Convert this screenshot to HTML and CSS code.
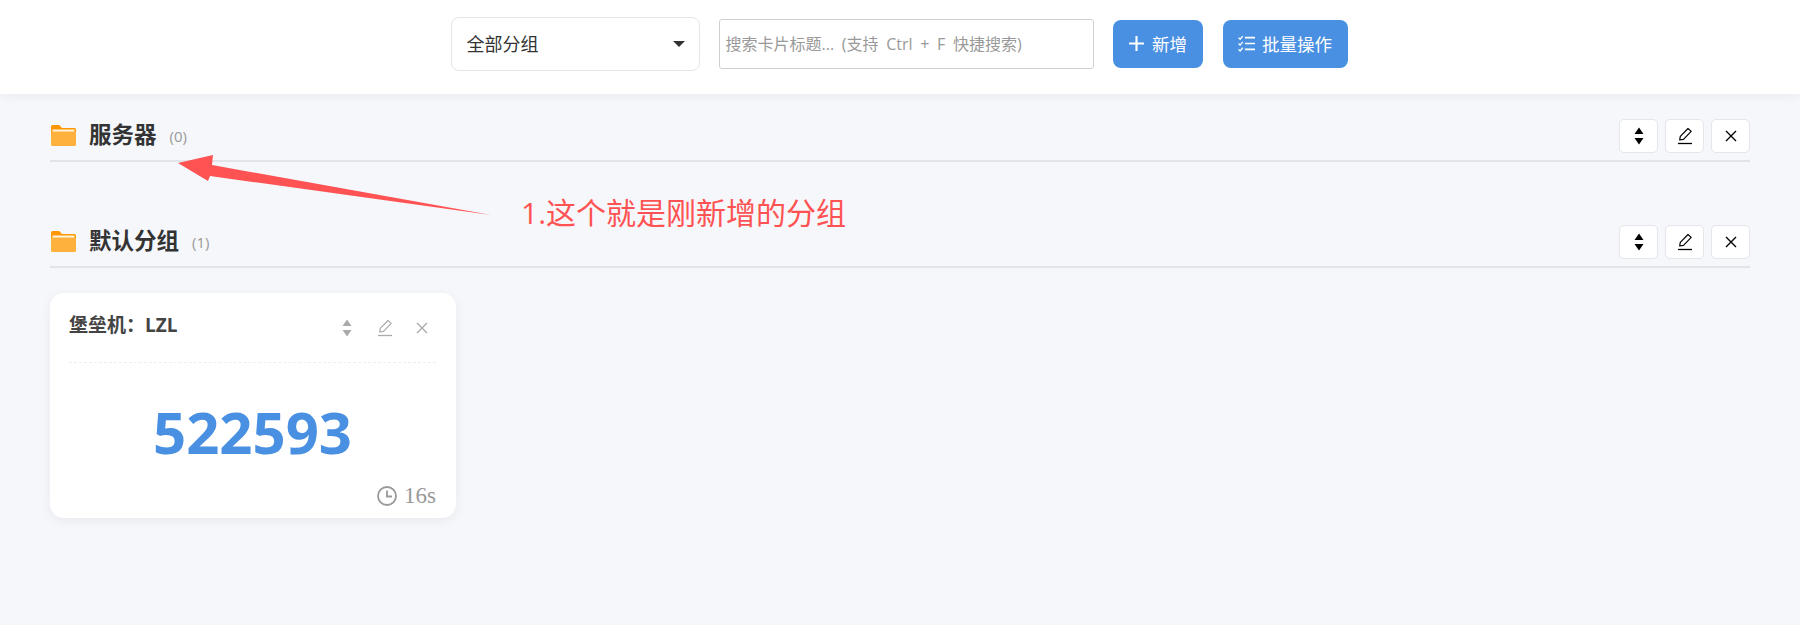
FILE: index.html
```html
<!DOCTYPE html>
<html lang="zh-CN">
<head>
<meta charset="utf-8">
<title>分组</title>
<link rel="stylesheet" href="styles.css">
</head>
<body>
<svg class="icon-defs" width="0" height="0" aria-hidden="true">
  <defs>
    <symbol id="i-sort" viewBox="0 0 14 20"><path d="M7 1.5 11.5 8h-9zM7 18.5 2.500 12h9z" fill="currentColor"/></symbol>
    <symbol id="i-edit" viewBox="0 0 16 18"><path d="M11 1.500 14.200 4.400 6.500 12.300 2.700 13 3.300 9.300z" fill="none" stroke="currentColor" stroke-width="1.200" stroke-linejoin="round"/><path d="M1 16.500h14" stroke="currentColor" stroke-width="1.300"/></symbol>
    <symbol id="i-close" viewBox="0 0 12 12"><path d="M1 1 11 11M11 1 1 11" stroke="currentColor" stroke-width="1.400" fill="none"/></symbol>
    <symbol id="i-folder" viewBox="0 0 25 22"><path d="M0 2.500A1.500 1.500 0 0 1 1.500 1h6.800l2.700 3h12.500A1.500 1.500 0 0 1 25 5.500V10H0z" fill="#ff9800"/><rect x="1.500" y="5.500" width="22" height="6" fill="#fff4e0"/><path d="M0 8.500q0-1 1-1h23q1 0 1 1v12q0 1.500-1.500 1.500h-22Q0 22 0 20.500z" fill="#ffb13d"/></symbol>
  </defs>
</svg>

<header class="topbar">
  <div class="select-wrap">
    <select class="group-select"><option>全部分组</option></select>
  </div>
  <input class="search" type="text" placeholder="搜索卡片标题... (支持 Ctrl + F 快捷搜索)">
  <button class="btn btn-add" type="button">
    <svg class="btn-icon" viewBox="0 0 16 16"><path d="M8 1v14M1 8h14" stroke="currentColor" stroke-width="2" fill="none"/></svg>
    新增
  </button>
  <button class="btn btn-batch" type="button">
    <svg class="btn-icon" viewBox="0 0 16 16"><path d="M6.500 2.500H16M6.500 8H16M6.500 13.500H16" stroke="currentColor" stroke-width="1.500" fill="none"/><path d="M.5 2.500 2 4 4.500 1M.5 8 2 9.500 4.500 6.500M.5 13.500 2 15 4.500 12" stroke="currentColor" stroke-width="1.200" fill="none"/></svg>
    批量操作
  </button>
</header>

<main class="content">
  <section class="group">
    <div class="group-head">
      <svg class="folder"><use href="#i-folder"/></svg>
      <h2 class="group-title">服务器</h2>
      <span class="group-count">(0)</span>
      <div class="group-actions">
        <button class="tool" type="button"><svg class="ic-sort"><use href="#i-sort"/></svg></button>
        <button class="tool" type="button"><svg class="ic-edit"><use href="#i-edit"/></svg></button>
        <button class="tool" type="button"><svg class="ic-close"><use href="#i-close"/></svg></button>
      </div>
    </div>
  </section>

  <section class="group">
    <div class="group-head">
      <svg class="folder"><use href="#i-folder"/></svg>
      <h2 class="group-title">默认分组</h2>
      <span class="group-count">(1)</span>
      <div class="group-actions">
        <button class="tool" type="button"><svg class="ic-sort"><use href="#i-sort"/></svg></button>
        <button class="tool" type="button"><svg class="ic-edit"><use href="#i-edit"/></svg></button>
        <button class="tool" type="button"><svg class="ic-close"><use href="#i-close"/></svg></button>
      </div>
    </div>
    <article class="card">
      <div class="card-head">
        <h3 class="card-title">堡垒机：LZL</h3>
        <div class="card-actions">
          <svg class="ic-sort"><use href="#i-sort"/></svg>
          <svg class="ic-edit"><use href="#i-edit"/></svg>
          <svg class="ic-close"><use href="#i-close"/></svg>
        </div>
      </div>
      <div class="card-code">522593</div>
      <div class="card-foot">
        <svg class="clock" viewBox="0 0 20 20"><circle cx="10" cy="10" r="9" fill="none" stroke="currentColor" stroke-width="1.800"/><path d="M10 4.500V10.500H15" fill="none" stroke="currentColor" stroke-width="1.800"/></svg>
        <span class="card-time">16s</span>
      </div>
    </article>
  </section>
</main>

<svg class="note-arrow" viewBox="0 0 1800 625" aria-hidden="true">
  <polygon points="178,163 213,155 212,165 491,215 210,176 208,181" fill="#ff5252"/>
</svg>
<div class="note-text">1.这个就是刚新增的分组</div>
</body>
</html>
```

FILE: styles.css
```css
* { box-sizing: border-box; }

html, body {
  margin: 0;
  height: 100%;
}

body {
  position: relative;
  overflow: hidden;
  background: #f5f7fb;
  color: #333;
  font-family: "Open Sans", "Noto Sans CJK SC", sans-serif;
}

.icon-defs { position: absolute; }

.topbar {
  display: flex;
  align-items: center;
  justify-content: center;
  gap: 19px;
  height: 94px;
  padding: 0 2px 7px 0;
  background: #fff;
  box-shadow: 0 2px 10px rgba(0, 0, 0, .05);
}

.select-wrap {
  position: relative;
  width: 249px;
  height: 54px;
}

.select-wrap::after {
  content: "";
  position: absolute;
  top: 24px;
  right: 15px;
  border-left: 6px solid transparent;
  border-right: 6px solid transparent;
  border-top: 6px solid #333;
}

.group-select {
  appearance: none;
  width: 100%;
  height: 100%;
  padding: 0 15px;
  border: 1px solid #e4e6ec;
  border-radius: 8px;
  background: #fff;
  color: #333;
  font: 18px "Open Sans", "Noto Sans CJK SC", sans-serif;
}

.search {
  width: 375px;
  height: 50px;
  padding: 0 6px;
  border: 1.500px solid #cfcfd2;
  border-radius: 3px;
  background: #fff;
  font: 16px "Open Sans", "Noto Sans CJK SC", sans-serif;
  word-spacing: 3.500px;
}

.search::placeholder { color: #999; opacity: 1; }

.btn {
  display: flex;
  align-items: center;
  justify-content: center;
  gap: 7px;
  height: 48px;
  padding: 0;
  border: 0;
  border-radius: 8px;
  background: #4a90e2;
  color: #fff;
  font: 17.500px "Open Sans", "Noto Sans CJK SC", sans-serif;
}

.btn-add { width: 90px; }
.btn-batch { width: 125px; margin-left: 1px; }

.btn-icon { width: 17px; height: 17px; }

.content { padding: 25px 50px 0; }

.group { margin-bottom: 63px; }

.group-head {
  display: flex;
  align-items: center;
  height: 43px;
  padding-bottom: 7px;
  border-bottom: 2px solid #e2e4ea;
}

.folder {
  width: 25px;
  height: 22px;
  margin: 0 13px 3px 1px;
}

.group-title {
  margin: 0 13px 2px 0;
  color: #333;
  font-size: 22.500px;
  font-weight: 700;
  line-height: 30px;
}

.group-count {
  color: #999;
  font-size: 15px;
  margin-bottom: 1px;
}

.group-actions {
  display: flex;
  gap: 7px;
  margin-left: auto;
}

.tool {
  display: flex;
  align-items: center;
  justify-content: center;
  width: 39px;
  height: 34px;
  padding: 0;
  border: 1px solid #e4e6ec;
  border-radius: 5px;
  background: #fff;
  color: #000;
}

.ic-sort { width: 14px; height: 20px; }
.ic-edit { width: 16px; height: 18px; }
.ic-close { width: 12px; height: 12px; }

.card {
  width: 406px;
  height: 225px;
  margin-top: 25px;
  padding: 20px 20px 7px 19px;
  border-radius: 14px;
  background: #fff;
  box-shadow: 0 3px 12px rgba(0, 0, 0, .06);
}

.card-head {
  display: flex;
  justify-content: space-between;
  height: 50px;
  padding-left: 0;
  border-bottom: 1px dashed #eceef1;
}

.card-title {
  margin: -2px 0 0;
  color: #444;
  font-size: 19px;
  font-weight: 700;
  line-height: 28px;
}

.card-actions {
  display: flex;
  align-items: center;
  color: #aaa;
  gap: 23px;
  height: 30px;
  padding-right: 8px;
}

.card-code {
  margin-top: 29px;
  color: #4a90e2;
  font-size: 58px;
  font-weight: 700;
  line-height: 80px;
  text-align: center;
}

.card-foot {
  display: flex;
  align-items: center;
  justify-content: flex-end;
  gap: 7px;
  margin-top: 10px;
  color: #999;
}

.clock { width: 20px; height: 20px; }

.card-time {
  font: 23px/28px "Liberation Serif", serif;
}

.note-arrow {
  position: absolute;
  top: 0;
  left: 0;
  width: 1800px;
  height: 625px;
  pointer-events: none;
}

.note-text {
  position: absolute;
  top: 192px;
  left: 521px;
  color: #ff5252;
  font-size: 30px;
  line-height: 42px;
  white-space: nowrap;
}
```
